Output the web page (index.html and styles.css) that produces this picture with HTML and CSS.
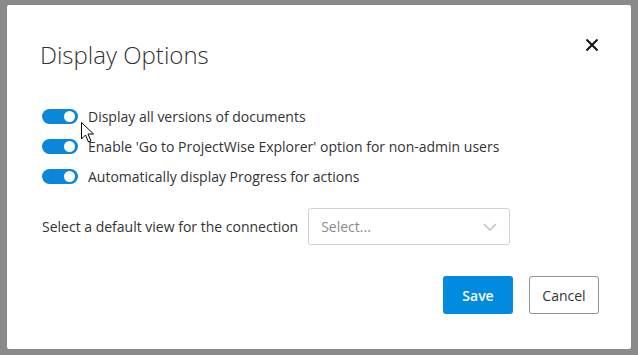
FILE: index.html
```html
<!DOCTYPE html>
<html>
<head>
<meta charset="utf-8">
<link rel="stylesheet" href="styles.css">
</head>
<body>
<div class="modal">
  <div class="header">
    <h1 class="title">Display Options</h1>
    <button class="close" aria-label="Close">
      <svg width="14" height="14" viewBox="0 0 14 14"><path d="M1.5 1.5L12.5 12.5M12.5 1.5L1.5 12.5" stroke="#111" stroke-width="2" fill="none"/></svg>
    </button>
  </div>
  <div class="options">
    <div class="row"><span class="toggle"><span class="knob"></span></span><span class="label">Display all versions of documents</span></div>
    <div class="row"><span class="toggle"><span class="knob"></span></span><span class="label">Enable 'Go to ProjectWise Explorer' option for non-admin users</span></div>
    <div class="row"><span class="toggle"><span class="knob"></span></span><span class="label">Automatically display Progress for actions</span></div>
  </div>
  <div class="view-row">
    <span class="view-label">Select a default view for the connection</span>
    <div class="select">
      <span class="placeholder">Select...</span>
      <svg width="14" height="8" viewBox="0 0 14 8"><path d="M1 1L7 7L13 1" stroke="#c4c4c4" stroke-width="1.6" fill="none"/></svg>
    </div>
  </div>
  <div class="footer">
    <button class="btn primary">Save</button>
    <button class="btn secondary">Cancel</button>
  </div>
  <svg class="cursor" width="13" height="21" viewBox="0 0 13 21"><path d="M0.5 0.5V17L4.5 13L7.5 20L10 19L7 12H12.5Z" fill="#fff" stroke="#000" stroke-width="1"/></svg>
</div>
</body>
</html>
```

FILE: styles.css
```css
* { box-sizing: border-box; }
html, body { margin: 0; padding: 0; }
body {
  background: #8a8a8a;
  width: 638px;
  height: 355px;
  overflow: hidden;
  font-family: "Open Sans", "Liberation Sans", sans-serif;
  color: #333;
}
.modal {
  position: relative;
  margin: 5px 0 0 7px;
  width: 624px;
  height: 344px;
  background: #fff;
  border-radius: 2px;
  padding: 30px 32px 0 35px;
}
.header {
  display: flex;
  justify-content: space-between;
  align-items: flex-start;
}
.title {
  margin: 0 0 0 -2px;
  font-size: 24px;
  font-weight: 300;
  line-height: 40px;
  color: #333;
}
.close {
  border: none;
  background: none;
  padding: 0;
  margin: 3px 0 0 0;
  width: 14px;
  height: 14px;
  display: flex;
}
.options {
  margin-top: 26px;
  display: flex;
  flex-direction: column;
}
.row {
  display: flex;
  align-items: center;
  height: 30px;
  font-size: 14px;
}
.toggle {
  width: 36px;
  height: 15px;
  border-radius: 8px;
  background: #0a87d9;
  display: flex;
  align-items: center;
  justify-content: flex-end;
  padding-right: 3px;
  margin-right: 10px;
}
.knob {
  width: 11px;
  height: 11px;
  border-radius: 50%;
  background: #fff;
}
.view-row {
  margin-top: 17px;
  display: flex;
  align-items: center;
  font-size: 14px;
}
.view-label { margin-right: 10px; }
.select {
  width: 202px;
  height: 37px;
  border: 1px solid #cfd3d6;
  border-radius: 3px;
  display: flex;
  align-items: center;
  justify-content: space-between;
  padding: 0 12px 0 12px;
}
.placeholder { color: #8a8a8a; font-size: 14px; }
.footer {
  margin-top: 31px;
  display: flex;
  justify-content: flex-end;
  gap: 16px;
}
.btn {
  width: 70px;
  height: 38px;
  border-radius: 3px;
  font-family: "Open Sans", "Liberation Sans", sans-serif;
  font-size: 14px;
}
.primary {
  background: #008be1;
  color: #fff;
  border: none;
  font-weight: 600;
}
.secondary {
  background: #fff;
  color: #333;
  border: 1px solid #8b959e;
}
.cursor {
  position: absolute;
  left: 74px;
  top: 117px;
}
```
